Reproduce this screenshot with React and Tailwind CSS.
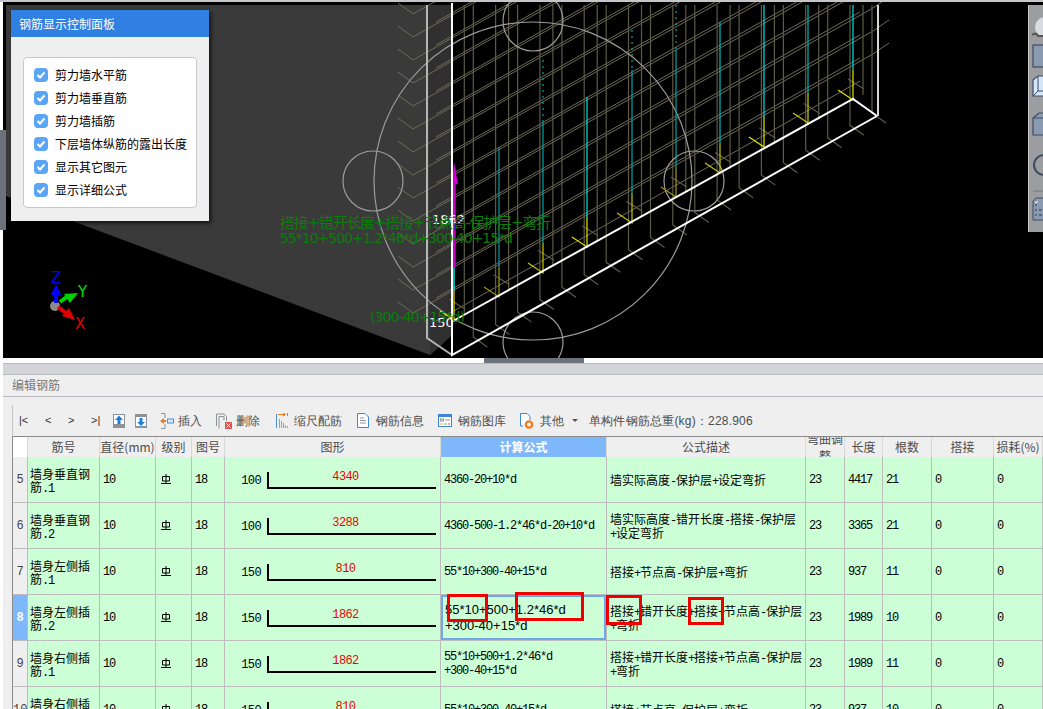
import React from "react";

const CJK = '"Noto Sans CJK SC", sans-serif';

const panelItems = [
  "剪力墙水平筋",
  "剪力墙垂直筋",
  "剪力墙插筋",
  "下层墙体纵筋的露出长度",
  "显示其它图元",
  "显示详细公式",
];

const rows = [
  { no: 5, name: "墙身垂直钢\n筋.1", hook: 100, len: 4340, formula: ["4360-20+10*d"], desc: "墙实际高度-保护层+设定弯折", bend: 23, total: 4417, count: 21 },
  { no: 6, name: "墙身垂直钢\n筋.2", hook: 100, len: 3288, formula: ["4360-500-1.2*46*d-20+10*d"], desc: "墙实际高度-错开长度-搭接-保护层\n+设定弯折", bend: 23, total: 3365, count: 21 },
  { no: 7, name: "墙身左侧插\n筋.1", hook: 150, len: 810, formula: ["55*10+300-40+15*d"], desc: "搭接+节点高-保护层+弯折", bend: 23, total: 937, count: 11 },
  { no: 8, name: "墙身左侧插\n筋.2", hook: 150, len: 1862, formula: ["55*10+500+1.2*46*d", "+300-40+15*d"], desc: "搭接+错开长度+搭接+节点高-保护层\n+弯折", bend: 23, total: 1989, count: 10, active: true },
  { no: 9, name: "墙身右侧插\n筋.1", hook: 150, len: 1862, formula: ["55*10+500+1.2*46*d", "+300-40+15*d"], desc: "搭接+错开长度+搭接+节点高-保护层\n+弯折", bend: 23, total: 1989, count: 11 },
  { no: 10, name: "墙身右侧插\n筋.2", hook: 150, len: 810, formula: ["55*10+300-40+15*d"], desc: "搭接+节点高-保护层+弯折", bend: 23, total: 937, count: 10 },
];

// half-width latin next to 12px CJK, like the bitmap font in the grid
function Mixed({ text }) {
  const parts = text.match(/[\x00-\x7f]+|[^\x00-\x7f]+/g) || [];
  return parts.map((p, i) =>
    /^[\x00-\x7f]/.test(p) ? (
      <span key={i} className="font-['Liberation_Mono'] text-[12px] leading-[0] tracking-[-1.2px]">{p}</span>
    ) : (
      <span key={i}>{p}</span>
    )
  );
}

function Scene() {
  const front = (x) => 355 - 0.562 * (x - 452);
  const back = (x) => 320 - 0.5525 * (x - 453);

  const diagonals = [];
  for (let i = 0; i < 30; i++) {
    const y = 313 - i * 23;
    diagonals.push(`M398 ${y - 11}L413 ${y}L873 ${y - 259}L889 ${y - 270}`);
    diagonals.push(`M436 ${y + 8}L860 ${y - 232}`);
  }

  const olive = [];
  for (let k = 0; k < 10; k++) {
    const x = 872 - 44.3 * k;
    const b = front(x) - 6;
    olive.push(`M${x} 5V${b}l14 10`);
  }
  for (let k = 0; k < 9; k++) {
    const x = 850 - 44.3 * k;
    const b = front(x) - 6;
    olive.push(`M${x} 5V${b}l14 10`);
  }
  for (let k = 0; k < 10; k++) {
    const x = 850 - 44.3 * k;
    const b = back(x + 3) - 2;
    olive.push(`M${x + 13} 5V${b - 2}M${x - 2} ${b - 18}l16 10`);
  }

  const mains = [
    { x: 499, top: 147, mid: 267, c: "#109aa0", y: "#a09a10" },
    { x: 543, top: 120, mid: 243, c: "#00a5a5", y: "#c8c800", dots: [60, 120] },
    { x: 587, top: 97, mid: 217, c: "#00e5e5", y: "#e5e500" },
    { x: 632, top: 70, mid: 193, c: "#00a5a5", y: "#c8c800", dots: [30, 70] },
    { x: 676, top: 50, mid: 167, c: "#00a5a5", y: "#a09a10", dots: [5, 50] },
    { x: 720, top: 22, mid: 143, c: "#00c0c0", y: "#c8c800" },
    { x: 764, top: 5, mid: 117, c: "#00e5e5", y: "#e5e500" },
    { x: 808, top: 5, mid: 93, c: "#00b5b5", y: "#d0d000" },
    { x: 853, top: 5, mid: 70, c: "#00e5e5", y: "#e5e500" },
  ];

  return (
    <svg className="block" width="1043" height="358" viewBox="0 0 1043 358">
      <rect width="1043" height="358" fill="#000" />
      <rect width="3" height="358" fill="#fff" />
      <rect y="130" width="6" height="100" fill="#6b727c" />
      <path d="M6 5H452V335L430 355L6 196Z" fill="#3a3a3a" />
      <path d="M428 5H452V335L430 355Z" fill="#303030" />

      <g fill="none" stroke="#6f6b5a" strokeWidth="1">
        {diagonals.map((d, i) => (
          <path key={i} d={d} />
        ))}
      </g>
      <g fill="none" stroke="#5c5a48" strokeWidth="1.2">
        {olive.map((d, i) => (
          <path key={i} d={d} />
        ))}
      </g>

      <g fill="none" stroke="#9a9a9a" strokeWidth="1.2">
        <circle cx="533" cy="181" r="159" />
        <circle cx="533" cy="21" r="30" />
        <circle cx="373" cy="181" r="30" />
        <circle cx="694" cy="181" r="30" />
        <circle cx="533" cy="342" r="30" />
      </g>

      {mains.map((m) => (
        <g key={m.x} fill="none" strokeWidth="1.2">
          {m.dots && <path d={`M${m.x} ${m.dots[0]}V${m.dots[1]}`} stroke={m.c} strokeDasharray="2 4" />}
          <path d={`M${m.x} ${m.top}V${m.mid}`} stroke={m.c} />
          <path d={`M${m.x} ${m.mid}V${m.mid + 30}l-15 -10`} stroke={m.y} />
        </g>
      ))}

      {/* active rebar on the near edge */}
      <path d="M454 268V290" stroke="#00e5e5" strokeWidth="1.5" />
      <path d="M454 290V320l-14 -9" stroke="#e5e500" strokeWidth="1.2" fill="none" />
      <path d="M454 268V180" stroke="#d000d0" strokeWidth="3" />
      <path d="M454 162L458 184H452Z" fill="#d000d0" />

      <g fill="none" stroke="#fff">
        <path d="M427 5V338L452 355" stroke="#b5b5b5" strokeWidth="2" />
        <path d="M452 3V355L877 116" strokeWidth="2" />
        <path d="M453 321L853 99L877 116" strokeWidth="2" />
        <path d="M878 5V116" stroke="#d8d8d8" strokeWidth="2" />
      </g>

      <g fontFamily='"DejaVu Sans", sans-serif' fontSize="13" fill="#fff">
        <text x="432" y="224">1862</text>
        <text x="429" y="327">150</text>
      </g>
      <g fontFamily={`"DejaVu Sans", ${CJK}`} fill="#0a7d0a">
        <text x="280" y="228" fontSize="15" textLength="271">搭接+错开长度+搭接+节点高-保护层+弯折</text>
        <text x="280" y="243" fontSize="14" textLength="233">55*10+500+1.2*46*d+300-40+15*d</text>
        <text x="370" y="322" fontSize="14" textLength="95">(300-40+15*d)</text>
      </g>

      {/* axis gizmo */}
      <circle cx="55" cy="306" r="5" fill="#8c8c8c" />
      <path d="M56 303V292" stroke="#0000ff" strokeWidth="4" />
      <path d="M56 284L61 295H51Z" fill="#0000ff" />
      <path d="M60 302L68 296" stroke="#00d000" strokeWidth="4" />
      <path d="M78 293L70 303L64 294Z" fill="#00d000" />
      <path d="M58 307L66 313" stroke="#e00000" strokeWidth="4" />
      <path d="M75 320L62 316L69 308Z" fill="#e00000" />
      <g fontFamily='"DejaVu Sans", sans-serif' fontSize="15">
        <text x="51" y="283" fill="#0000ff">Z</text>
        <text x="78" y="297" fill="#00e000">Y</text>
        <text x="75" y="329" fill="#e00000">X</text>
      </g>
    </svg>
  );
}

function ViewToolbar() {
  return (
    <div className="absolute right-0 top-[5px] w-[15px] h-[227px] bg-[#9c9da1] border-l border-[#c8c8c8] overflow-hidden">
      <svg width="15" height="227" viewBox="0 0 15 227" className="block">
        <circle cx="16" cy="22" r="10" fill="#d8dbe0" />
        <path d="M3 30q4 -3 6 1h7" fill="none" stroke="#555" strokeWidth="2" />
        <rect x="4" y="40" width="14" height="22" fill="#8a9ab0" stroke="#3f4d60" strokeWidth="1.2" />
        <path d="M4 75l5 -4h10v20H4Z" fill="#d5e6fb" stroke="#3f4d60" strokeWidth="1.2" />
        <path d="M9 71v15l-5 5M9 86h10" fill="none" stroke="#3f4d60" />
        <path d="M4 113l6 -5h9v22H4Z" fill="#8a9ab0" stroke="#3f4d60" strokeWidth="1.2" />
        <path d="M4 113h15" stroke="#3f4d60" />
        <circle cx="15" cy="160" r="10" fill="none" stroke="#3f4d60" strokeWidth="2" />
        <path d="M4 186h11" stroke="#777" />
        <path d="M4 196l3 -3h9v22H4Z" fill="#8a9ab0" stroke="#3f4d60" />
        <path d="M6 200h2M6 205h2M6 210h2M10 205h3M10 210h3" stroke="#2f3a4a" strokeWidth="1.2" />
        <path d="M6 197l1 1 2 -2" stroke="#fff" fill="none" />
      </svg>
    </div>
  );
}

function ControlPanel() {
  return (
    <div className="absolute left-[11px] top-[10px] w-[198px] h-[211px] bg-[#efefef] shadow-[2px_2px_4px_rgba(0,0,0,0.7)]">
      <div className="h-[27px] bg-[#2f80e2] pl-2 text-[12px] leading-[27px] text-white">钢筋显示控制面板</div>
      <div className="mx-3 mt-5 h-[151px] rounded border border-[#c6c9ce] bg-white pl-[10px] pt-[10px]">
        <ul className="flex flex-col gap-[9px]">
          {panelItems.map((label) => (
            <li key={label} className="flex h-[14px] items-center gap-[7px] whitespace-nowrap text-[12px] text-black">
              <span className="flex h-[14px] w-[14px] items-center justify-center rounded-sm bg-[#5aa5f6]">
                <svg width="10" height="10" viewBox="0 0 10 10">
                  <path d="M1.5 5L4 7.5L8.5 2.5" fill="none" stroke="#fff" strokeWidth="2" />
                </svg>
              </span>
              {label}
            </li>
          ))}
        </ul>
      </div>
    </div>
  );
}

function ToolText({ children, className }) {
  return <span className={`whitespace-nowrap text-[12px] text-[#4c4c4c] ${className || ""}`}>{children}</span>;
}

function Toolbar() {
  return (
    <div className="ml-[9px] flex h-[31px] items-center border-l border-[#c4c4c4] font-['Liberation_Sans']">
      <div className="flex w-[92px] pl-[6px] text-[11px] text-[#333]">
        <span className="w-[26px]">|&lt;</span>
        <span className="w-[23px]">&lt;</span>
        <span className="w-[23px]">&gt;</span>
        <span>&gt;|</span>
      </div>
      <svg className="ml-[8px]" width="12" height="14" viewBox="0 0 12 14">
        <rect width="12" height="14" fill="#8d9299" />
        <rect x="1" y="1" width="10" height="9" fill="#fff" />
        <path d="M6 1.5L10 6H7.5V10H4.5V6H2Z" fill="#1f7fd6" />
      </svg>
      <svg className="ml-[10px]" width="12" height="14" viewBox="0 0 12 14">
        <rect width="12" height="14" fill="#8d9299" />
        <rect x="1" y="3" width="10" height="9" fill="#fff" />
        <path d="M6 12L2 8H4.5V4H7.5V8H10Z" fill="#1f7fd6" />
      </svg>
      <svg className="ml-[13px]" width="14" height="16" viewBox="0 0 14 16">
        <path d="M1 .5H5M5 .5V5M1 15.5H5M5 15.5V11" fill="none" stroke="#8d9299" />
        <path d="M0 8L4 5V7H6V9H4V11Z" fill="#f07a1a" />
        <rect x="7.5" y="6" width="6" height="4" fill="#d8ebfb" stroke="#4a90d9" />
      </svg>
      <ToolText className="ml-[4px]">插入</ToolText>
      <svg className="ml-[14px]" width="16" height="16" viewBox="0 0 16 16">
        <path d="M.5 13V1H8L10.500 3.500V8" fill="none" stroke="#8d9299" />
        <path d="M3 15.500V3.500H8V7" fill="none" stroke="#8d9299" />
        <rect x="9" y="9" width="7" height="7" fill="#d9534f" />
        <path d="M10.500 10.500L14.500 14.500M14.500 10.500L10.500 14.500" stroke="#fff" />
      </svg>
      <ToolText className="ml-[4px]">删除</ToolText>
      <svg className="ml-[16px]" width="12" height="15" viewBox="0 0 12 15">
        <path d="M.5 1V15" stroke="#4a90d9" />
        <path d="M2 1.500H9M7 0L9.500 1.500L7 3M11.500 0V3" fill="none" stroke="#f07a1a" />
        <path d="M3.500 6V15M5.500 8V15M7.500 10V15M9.500 12V15M11.500 13V15" stroke="#9aa0a6" />
      </svg>
      <ToolText className="ml-[6px]">缩尺配筋</ToolText>
      <svg className="ml-[15px]" width="12" height="15" viewBox="0 0 12 15">
        <path d="M.5 .5H8L11.500 4V14.500H.5Z" fill="#fff" stroke="#3d87d8" />
        <path d="M3 5H7M3 7.500H9M3 10H9" stroke="#8d9299" />
      </svg>
      <ToolText className="ml-[7px]">钢筋信息</ToolText>
      <svg className="ml-[14px]" width="14" height="13" viewBox="0 0 14 13">
        <rect x=".5" y=".5" width="13" height="12" fill="#fff" stroke="#3d87d8" />
        <rect x="0" y="0" width="14" height="3" fill="#3d87d8" />
        <rect x="2.500" y="5" width="3" height="2" fill="none" stroke="#8d9299" />
        <path d="M7 6H12" stroke="#8d9299" />
        <path d="M2 10H5" stroke="#f2b632" />
        <path d="M6 10H9" stroke="#6ab04c" />
        <path d="M10 10H12" stroke="#d9534f" />
      </svg>
      <ToolText className="ml-[6px]">钢筋图库</ToolText>
      <svg className="ml-[14px]" width="14" height="16" viewBox="0 0 14 16">
        <path d="M3 13H.5V.5H7L10 3.500V7" fill="#fff" stroke="#3d87d8" />
        <circle cx="9" cy="11.500" r="3.200" fill="none" stroke="#f07a1a" strokeWidth="2.200" />
      </svg>
      <ToolText className="ml-[6px]">其他</ToolText>
      <span className="ml-[8px] h-0 w-0 border-x-[3px] border-t-[3px] border-x-transparent border-t-[#555]" />
      <ToolText className="ml-[11px] tracking-[0.2px]">单构件钢筋总重(kg)：228.906</ToolText>
    </div>
  );
}

// grade mark, the HRB bar symbol has no glyph in the installed fonts
function GradeMark() {
  return (
    <svg className="block" width="10" height="11" viewBox="0 0 10 11">
      <path d="M1.500 2.500H8.500V7H1.500ZM5 0V9M0 9.500H10" fill="none" stroke="#000" strokeWidth="1" />
    </svg>
  );
}

function BarShape({ hook, len }) {
  return (
    <div className="flex h-[45px] items-start">
      <span className="mt-[18px] w-[36px] text-right font-['Liberation_Mono'] text-[12px] leading-none tracking-[-0.6px] text-black">{hook}</span>
      <div className="relative ml-[6px] mt-[15px] h-[17px] w-[169px] border-b-2 border-l-2 border-black">
        <span className="absolute inset-x-0 -top-[1px] pr-[14px] text-center font-['Liberation_Mono'] text-[12px] leading-none tracking-[-0.6px] text-[#f00000]">{len}</span>
      </div>
    </div>
  );
}

function RebarTable() {
  const heads = ["筋号", "直径(mm)", "级别", "图号", "图形", "计算公式", "公式描述", "弯曲调整", "长度", "根数", "搭接", "损耗(%)"];
  const td = "border-b border-r border-[#bcbcbc] bg-[#ccffd6] p-0 align-middle text-black";
  const num = `${td} pl-[3px] font-['Liberation_Mono'] text-[12px] tracking-[-1.2px]`;

  return (
    <table className="ml-[9px] w-[1031px] table-fixed border-separate border-spacing-0 border-t border-l border-[#8a8a8a]">
      <colgroup>
        {[15, 72, 56, 36, 33, 216, 166, 199, 39, 38, 49, 62, 49].map((w, i) => (
          <col key={i} style={{ width: w }} />
        ))}
      </colgroup>
      <thead>
        <tr className="h-[20px] text-[12px] text-[#4c4c4c]">
          <th className="border-r border-[#d8d8d8] bg-white" />
          {heads.map((h) => (
            <th
              key={h}
              className={`overflow-hidden whitespace-nowrap border-r border-[#d8d8d8] p-0 ${h === "计算公式" ? "bg-[#7fb8fa] font-bold text-white" : "bg-[#efefef] font-normal"}`}
            >
              {h === "弯曲调整" ? (
                <div className="h-[20px] overflow-hidden">
                  <div className="-mt-[7px] whitespace-normal leading-[17px]">{h}</div>
                </div>
              ) : (
                h
              )}
            </th>
          ))}
        </tr>
      </thead>
      <tbody>
        {rows.map((r) => (
          <tr key={r.no} className="h-[46px]">
            <td className={`border-b border-r border-[#bcbcbc] p-0 text-center font-['Liberation_Mono'] text-[12px] ${r.active ? "bg-[#7fb8fa] font-bold text-white" : "bg-[#efefef] text-[#444]"}`}>
              {r.no}
            </td>
            <td className={`${td} whitespace-pre-line pl-[2px] text-[12px] leading-[13px]`}>
              <Mixed text={r.name} />
            </td>
            <td className={num}>10</td>
            <td className={`${td} pl-[5px]`}>
              <GradeMark />
            </td>
            <td className={num}>18</td>
            <td className={td}>
              <BarShape hook={r.hook} len={r.len} />
            </td>
            {r.active ? (
              <td className={`${td} pl-[4px] font-['Liberation_Sans'] text-[13px] leading-[16px] shadow-[inset_0_0_0_2px_#6fa8ea]`}>
                {r.formula.map((f) => (
                  <div key={f}>{f}</div>
                ))}
              </td>
            ) : (
              <td className={`${num} leading-[14px]`}>
                {r.formula.map((f) => (
                  <div key={f}>{f}</div>
                ))}
              </td>
            )}
            <td className={`${td} whitespace-pre-line pl-[3px] text-[12px] leading-[14px]`}>
              <Mixed text={r.desc} />
            </td>
            <td className={num}>{r.bend}</td>
            <td className={num}>{r.total}</td>
            <td className={num}>{r.count}</td>
            <td className={num}>0</td>
            <td className={num}>0</td>
          </tr>
        ))}
      </tbody>
    </table>
  );
}

export default function App() {
  return (
    <div className="relative h-[709px] w-[1043px] overflow-hidden bg-white font-['Noto_Sans_CJK_SC',sans-serif]">
      <div className="relative h-[358px]">
        <Scene />
        <div className="absolute left-0 top-0 h-[2px] w-full bg-[#c4c6ca]" />
        <ViewToolbar />
        <ControlPanel />
      </div>

      {/* splitter */}
      <div className="flex h-[5px] justify-start bg-white">
        <div className="ml-[484px] h-[5px] w-[100px] bg-[#6a737c]" />
      </div>

      <div className="ml-[3px]">
        <div className="h-[12px] border-y border-[#b8bac0] bg-[#d3d4d8]" />
        <div className="h-[22px] border-b border-[#b8bac0] bg-[#efefef] pl-[9px] text-[12px] leading-[20px] text-[#7a7a7a]">编辑钢筋</div>
        <div className="h-[400px] bg-[#efefef] pt-[8px]">
          <Toolbar />
          <RebarTable />
        </div>
      </div>

      {/* review highlights drawn on top of the grid */}
      <div className="absolute left-[447px] top-[594px] h-[28px] w-[41px] border-[3px] border-[#ee0000]" />
      <div className="absolute left-[515px] top-[592px] h-[29px] w-[69px] border-[3px] border-[#ee0000]" />
      <div className="absolute left-[606px] top-[595px] h-[30px] w-[36px] border-[3px] border-[#ee0000]" />
      <div className="absolute left-[688px] top-[597px] h-[28px] w-[36px] border-[3px] border-[#ee0000]" />
    </div>
  );
}
